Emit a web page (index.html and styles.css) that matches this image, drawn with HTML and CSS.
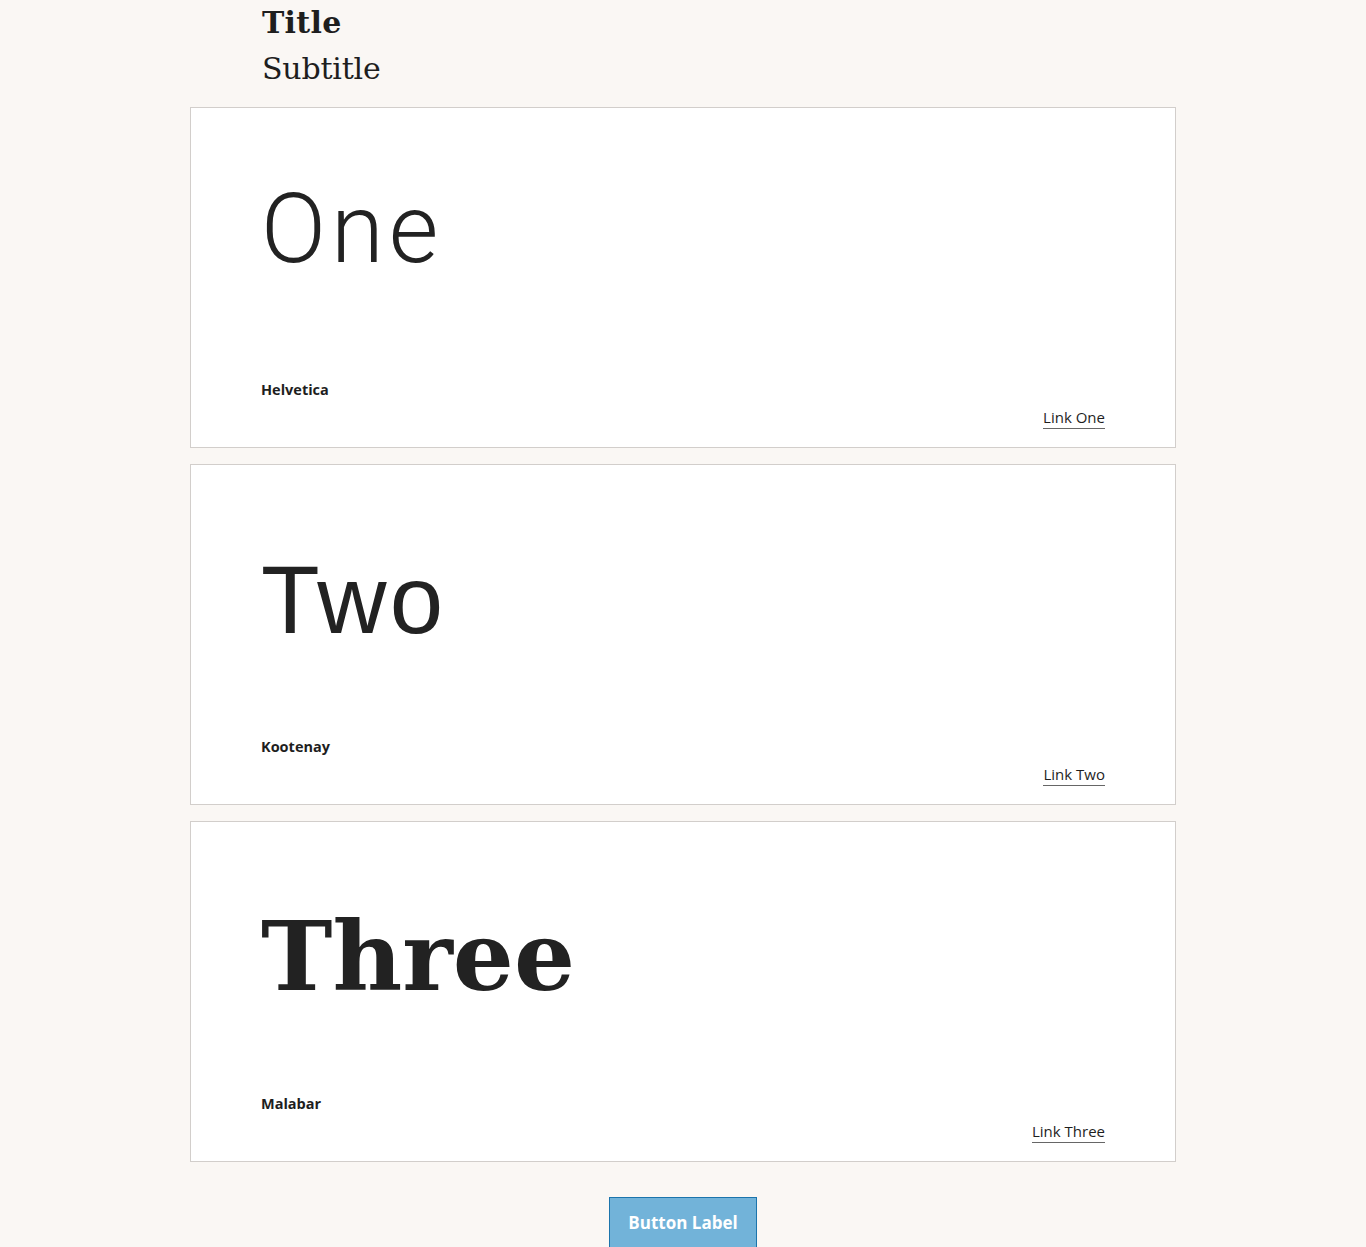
FILE: index.html
```html
<!DOCTYPE html>
<html lang="en">
<head>
<meta charset="utf-8">
<title>Type specimens</title>
<link rel="stylesheet" href="styles.css">
</head>
<body>
<main class="page">
  <header class="header">
    <h1 class="title">Title</h1>
    <h2 class="subtitle">Subtitle</h2>
  </header>
  <section class="cards">
    <article class="card">
      <div class="sample sample--one">One</div>
      <div class="card-foot">
        <span class="font-name">Helvetica</span>
        <a class="card-link" href="#">Link One</a>
      </div>
    </article>
    <article class="card">
      <div class="sample sample--two">Two</div>
      <div class="card-foot">
        <span class="font-name">Kootenay</span>
        <a class="card-link" href="#">Link Two</a>
      </div>
    </article>
    <article class="card">
      <div class="sample sample--three">Three</div>
      <div class="card-foot">
        <span class="font-name">Malabar</span>
        <a class="card-link" href="#">Link Three</a>
      </div>
    </article>
  </section>
  <div class="actions">
    <button class="button" type="button">Button Label</button>
  </div>
</main>
</body>
</html>
```

FILE: styles.css
```css
html, body {
  margin: 0;
  padding: 0;
}
body {
  background: #faf7f4;
  color: #222;
  font-family: "Open Sans", "Noto Sans", sans-serif;
}
.page {
  width: 986px;
  margin: 0 auto;
}
.header {
  padding-left: 72px;
  margin-bottom: 15px;
}
.title, .subtitle {
  margin: 0;
  font-family: "DejaVu Serif", "Liberation Serif", serif;
  font-size: 30px;
  line-height: 46px;
  color: #1e1e1e;
}
.title {
  font-weight: 700;
  letter-spacing: 0.3px;
}
.subtitle {
  font-weight: 400;
  letter-spacing: -0.2px;
}
.cards {
  display: flex;
  flex-direction: column;
  gap: 16px;
}
.card {
  box-sizing: border-box;
  height: 341px;
  background: #fff;
  border: 1px solid #d2cecb;
  padding: 87px 70px 18px 70px;
  display: flex;
  flex-direction: column;
}
.sample {
  font-size: 96px;
  line-height: 1;
  color: #222;
}
.sample--one {
  font-family: Roboto, "Liberation Sans", sans-serif;
  font-weight: 300;
  margin-top: -14px;
  letter-spacing: 5px;
}
.sample--two {
  font-family: "Liberation Sans", Arial, sans-serif;
  font-weight: 400;
  letter-spacing: 3px;
}
.sample--three {
  font-family: "DejaVu Serif", "Liberation Serif", serif;
  font-weight: 700;
  letter-spacing: 0;
}
.card-foot {
  margin-top: auto;
  display: flex;
  justify-content: space-between;
  align-items: flex-start;
}
.font-name {
  font-size: 14.5px;
  line-height: 20px;
  font-weight: 700;
  color: #1e1e1e;
}
.card-link {
  margin-top: 26px;
  font-size: 15px;
  line-height: 22px;
  color: #1e1e1e;
  text-decoration: none;
  border-bottom: 1px solid #666;
}
.actions {
  display: flex;
  justify-content: center;
  padding-top: 35px;
}
.button {
  font-family: "Open Sans", "Noto Sans", sans-serif;
  font-size: 17px;
  font-weight: 700;
  line-height: 24px;
  color: #fff;
  background: #72b3d9;
  border: 1px solid #1b74ac;
  border-radius: 0;
  padding: 13px 18px 17px;
  cursor: pointer;
}
```
